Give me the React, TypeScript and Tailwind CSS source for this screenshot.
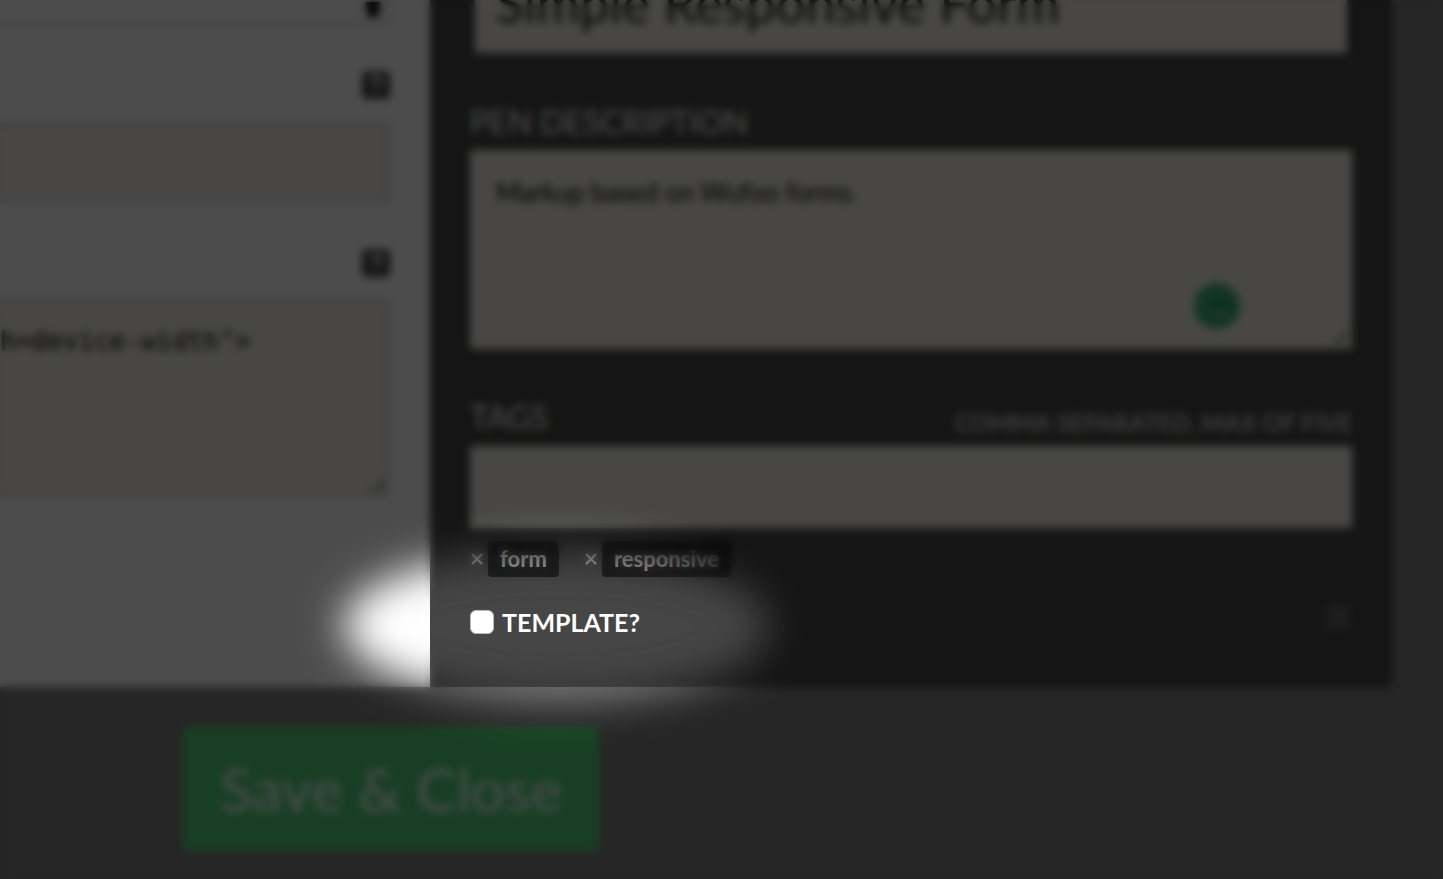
import { useState } from "react"

interface HelpButtonProps {
  label: string
  className: string
}

function HelpButton({ label, className }: HelpButtonProps) {
  return (
    <button type="button" aria-label={label} className={className}>
      <svg viewBox="0 0 28 28" className="h-7 w-7" fill="none">
        <rect width="28" height="28" rx="5" fill="currentColor" />
        <path
          d="M9 11c0-3 2-5 5-5s5 2 5 4.500c0 3-5 3-5 6"
          stroke="white"
          strokeOpacity="0.8"
          strokeWidth="4"
        />
        <circle cx="14" cy="21" r="2.200" fill="white" fillOpacity="0.8" />
      </svg>
    </button>
  )
}

function ResizeGrip() {
  return (
    <svg viewBox="0 0 16 16" className="pointer-events-none absolute right-1 bottom-1 h-4 w-4" stroke="#777777" strokeWidth="2">
      <path d="M1 15L15 1M8 15l7-7" />
    </svg>
  )
}

function HeadSettings() {
  return (
    <section className="w-[430px] shrink-0 bg-white pr-10">
      <div className="relative -mt-14 -ml-1">
        <select
          aria-label="HTML preprocessor"
          className="block h-[82px] w-full appearance-none border-4 border-[#e6e6e6] bg-white"
        />
        <svg viewBox="0 0 14 32" className="pointer-events-none absolute right-2.5 bottom-2 h-8 w-3.5" fill="#000000">
          <path d="M7 0l7 13H0zM0 16h14v7l-4 9H4L0 23z" />
        </svg>
      </div>

      <div className="mt-[45px] flex justify-end">
        <HelpButton label="Help with HTML classes" className="text-[#444444]" />
      </div>
      <input
        type="text"
        aria-label="HTML classes"
        className="mt-[23px] -ml-1 block h-[82px] w-[394px] border-4 border-[#dcdada] bg-[#f0efe8]"
      />

      <div className="mt-[45px] flex justify-end">
        <HelpButton label="Help with the head" className="text-[#444444]" />
      </div>
      <div className="relative mt-[22px] -ml-1">
        <textarea
          aria-label="Stuff for head"
          defaultValue={'h=device-width">'}
          className="block h-[198px] w-full resize-none overflow-hidden border-4 border-[#dcdada] bg-[#f0efe8] py-5 font-['DejaVu_Sans_Mono',monospace] text-[26px] leading-9 text-black"
        />
        <ResizeGrip />
      </div>
    </section>
  )
}

interface TagProps {
  name: string
  onRemove: () => void
}

function Tag({ name, onRemove }: TagProps) {
  return (
    <li className="flex items-center gap-1">
      <button type="button" aria-label={`Remove ${name}`} onClick={onRemove} className="w-3.5 text-[#b4b4b4]">
        <svg viewBox="0 0 14 14" className="h-3.5 w-3.5" stroke="currentColor" strokeWidth="2.400">
          <path d="M2 2l10 10M12 2L2 12" />
        </svg>
      </button>
      <span className="rounded bg-[#1e1e1e] px-3 text-[22px] leading-9 font-bold text-[#bbbbbb]">{name}</span>
    </li>
  )
}

function PenDetails() {
  const [tags, setTags] = useState(["form", "responsive"])
  const [template, setTemplate] = useState(false)

  return (
    <section className="flex-1 bg-[#464646] px-10 pb-[47px]">
      <div className="-mt-12 px-[5px]">
        <input
          type="text"
          aria-label="Pen title"
          defaultValue="Simple Responsive Form"
          className="block h-[101px] w-full bg-[#f0efe8] px-5 text-[53px] text-[#111111]"
        />
      </div>

      <label htmlFor="description" className="mt-[49px] mb-2 block text-[32px] leading-10 text-white">
        PEN DESCRIPTION
      </label>
      <div className="relative">
        <textarea
          id="description"
          defaultValue="Markup based on Wufoo forms."
          className="block h-[199px] w-full resize-none bg-[#f0efe8] px-[26px] py-6 text-[26px] leading-9 text-black"
        />
        <svg viewBox="0 0 46 46" className="absolute right-28 bottom-5 h-[46px] w-[46px]" fill="none">
          <circle cx="23" cy="23" r="23" fill="#3fae80" />
          <path d="M18 20h18c0 4-2 7-4 9v-6H22c-3 0-4-1-4-3z" fill="#00804a" />
          <path d="M25 30l6-4v7z" fill="#d8f0e4" />
        </svg>
        <ResizeGrip />
      </div>

      <div className="mt-12 mb-[9px] flex items-center justify-between">
        <label htmlFor="tags" className="text-[32px] leading-10 text-white">
          TAGS
        </label>
        <span className="pt-3 text-2xl leading-7 font-bold text-[#d0d0d0]">COMMA SEPARATED, MAX OF FIVE</span>
      </div>
      <input id="tags" type="text" className="block h-[82px] w-full bg-[#f0efe8] px-[26px] text-[26px]" />

      <ul className="mt-[13px] flex gap-[25px]">
        {tags.map((tag) => (
          <Tag key={tag} name={tag} onRemove={() => setTags(tags.filter((t) => t !== tag))} />
        ))}
      </ul>

      <div className="mt-[27px] flex h-9 items-start justify-between">
        <label htmlFor="template" className="flex items-center gap-2 text-[25px] leading-9 font-bold text-white">
          <input
            id="template"
            type="checkbox"
            checked={template}
            onChange={(e) => setTemplate(e.target.checked)}
            className="h-6 w-6 appearance-none rounded-md border border-[#bbbbbb] bg-white checked:bg-[#47cf73]"
          />
          TEMPLATE?
        </label>
        <HelpButton label="Help with templates" className="text-[#888888] opacity-30" />
      </div>
    </section>
  )
}

export default function App() {
  return (
    <main className="relative min-h-screen overflow-hidden bg-[#7f7f7f] font-[Lato,sans-serif]">
      <div className="flex pr-[51px]">
        <HeadSettings />
        <PenDetails />
      </div>
      <div className="px-[183px] py-10">
        <button type="button" className="h-[124px] rounded-sm bg-[#50d275] px-[37px] text-[60px] text-white">
          Save &amp; Close
        </button>
      </div>

      {/* soft ellipse left clear around the template checkbox */}
      <svg className="absolute h-0 w-0" aria-hidden="true">
        <filter id="soften" filterUnits="userSpaceOnUse" x="0" y="0" width="4000" height="4000">
          <feGaussianBlur stdDeviation="20" />
        </filter>
        <mask id="spotlight" maskUnits="userSpaceOnUse" x="0" y="0" width="4000" height="4000">
          <rect width="4000" height="4000" fill="white" />
          <ellipse cx="557" cy="626" rx="213" ry="75" fill="black" filter="url(#soften)" />
        </mask>
      </svg>
      <div className="pointer-events-none absolute inset-0 bg-black/70 backdrop-blur-[4px] [mask:url(#spotlight)]" />
    </main>
  )
}
